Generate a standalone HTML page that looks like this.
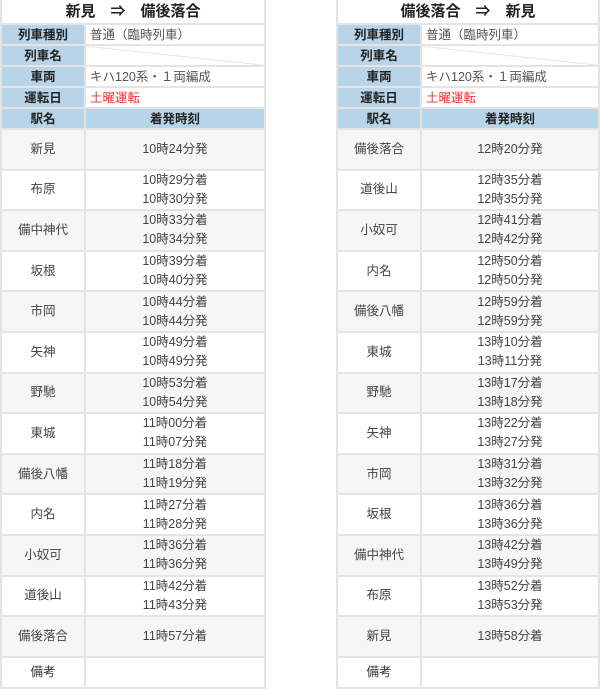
<!DOCTYPE html>
<html><head><meta charset="utf-8"><style>
body{margin:0;width:600px;height:688px;background:#fff;font-family:"Liberation Sans","Noto Sans CJK JP",sans-serif;color:#333;position:relative;overflow:hidden}
table{position:absolute;top:0;border-collapse:collapse;table-layout:fixed;font-size:12.5px}
td{border:2px solid #e4e4e4;padding:0;text-align:center;vertical-align:middle;line-height:19px}
.t{height:23px;font-size:15px;font-weight:bold;color:#222;border-top:none}
.h{background:#b8d4e8;font-weight:bold;color:#222;height:19px;line-height:18px}
.v{text-align:left;padding-left:4px;color:#555;line-height:18px}
.r{color:#f03030}
.g td{background:#f6f6f6}
.s td{height:38.6px;color:#444}
.b td{height:29px}
.n{background:linear-gradient(to bottom left,transparent 49%,#ddd 50%,transparent 53%)}
</style></head><body>
<table style="left:0;width:266px"><colgroup><col style="width:84px"><col></colgroup>
<tr><td colspan="2" class="t">新見　⇒　備後落合</td></tr>
<tr><td class="h">列車種別</td><td class="v">普通（臨時列車）</td></tr>
<tr><td class="h">列車名</td><td class="n"></td></tr>
<tr><td class="h">車両</td><td class="v">キハ120系・１両編成</td></tr>
<tr><td class="h">運転日</td><td class="v r">土曜運転</td></tr>
<tr><td class="h">駅名</td><td class="h">着発時刻</td></tr>
<tr class="s g"><td>新見</td><td>10時24分発</td></tr>
<tr class="s"><td>布原</td><td>10時29分着<br>10時30分発</td></tr>
<tr class="s g"><td>備中神代</td><td>10時33分着<br>10時34分発</td></tr>
<tr class="s"><td>坂根</td><td>10時39分着<br>10時40分発</td></tr>
<tr class="s g"><td>市岡</td><td>10時44分着<br>10時44分発</td></tr>
<tr class="s"><td>矢神</td><td>10時49分着<br>10時49分発</td></tr>
<tr class="s g"><td>野馳</td><td>10時53分着<br>10時54分発</td></tr>
<tr class="s"><td>東城</td><td>11時00分着<br>11時07分発</td></tr>
<tr class="s g"><td>備後八幡</td><td>11時18分着<br>11時19分発</td></tr>
<tr class="s"><td>内名</td><td>11時27分着<br>11時28分発</td></tr>
<tr class="s g"><td>小奴可</td><td>11時36分着<br>11時36分発</td></tr>
<tr class="s"><td>道後山</td><td>11時42分着<br>11時43分発</td></tr>
<tr class="s g"><td>備後落合</td><td>11時57分着</td></tr>
<tr class="b"><td>備考</td><td></td></tr>
</table>
<table style="left:336px;width:264px"><colgroup><col style="width:84px"><col></colgroup>
<tr><td colspan="2" class="t">備後落合　⇒　新見</td></tr>
<tr><td class="h">列車種別</td><td class="v">普通（臨時列車）</td></tr>
<tr><td class="h">列車名</td><td class="n"></td></tr>
<tr><td class="h">車両</td><td class="v">キハ120系・１両編成</td></tr>
<tr><td class="h">運転日</td><td class="v r">土曜運転</td></tr>
<tr><td class="h">駅名</td><td class="h">着発時刻</td></tr>
<tr class="s g"><td>備後落合</td><td>12時20分発</td></tr>
<tr class="s"><td>道後山</td><td>12時35分着<br>12時35分発</td></tr>
<tr class="s g"><td>小奴可</td><td>12時41分着<br>12時42分発</td></tr>
<tr class="s"><td>内名</td><td>12時50分着<br>12時50分発</td></tr>
<tr class="s g"><td>備後八幡</td><td>12時59分着<br>12時59分発</td></tr>
<tr class="s"><td>東城</td><td>13時10分着<br>13時11分発</td></tr>
<tr class="s g"><td>野馳</td><td>13時17分着<br>13時18分発</td></tr>
<tr class="s"><td>矢神</td><td>13時22分着<br>13時27分発</td></tr>
<tr class="s g"><td>市岡</td><td>13時31分着<br>13時32分発</td></tr>
<tr class="s"><td>坂根</td><td>13時36分着<br>13時36分発</td></tr>
<tr class="s g"><td>備中神代</td><td>13時42分着<br>13時49分発</td></tr>
<tr class="s"><td>布原</td><td>13時52分着<br>13時53分発</td></tr>
<tr class="s g"><td>新見</td><td>13時58分着</td></tr>
<tr class="b"><td>備考</td><td></td></tr>
</table>
</body></html>
